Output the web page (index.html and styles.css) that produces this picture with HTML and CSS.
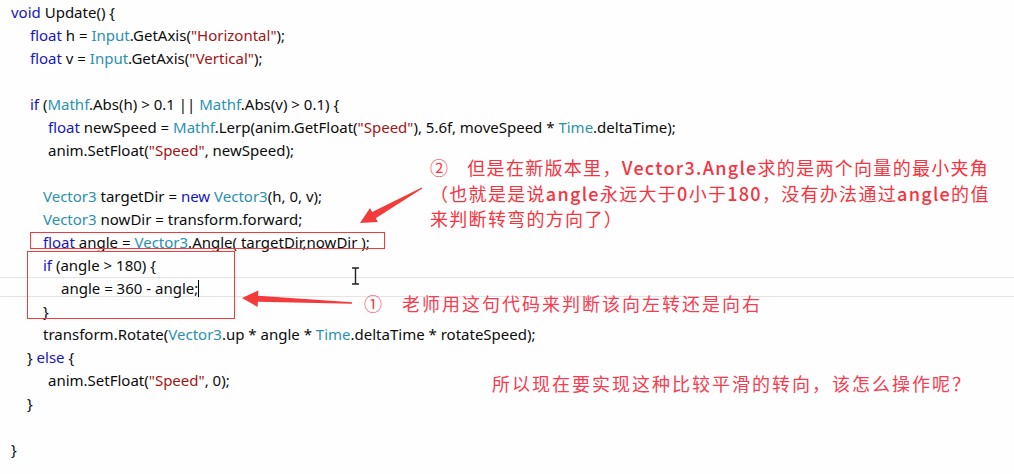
FILE: index.html
```html
<!DOCTYPE html>
<html lang="en">
<head>
    <meta charset="UTF-8">
    <title>Update()</title>
    <link rel="stylesheet" href="styles.css">
</head>
<body>

    <div class="editor">
        <!-- code lines -->
        <div class="ln"><span class="kw">void</span> Update() {</div>
        <div class="ln i1"><span class="kw">float</span> h = <span class="ty">Input</span>.GetAxis(<span class="str">"Horizontal"</span>);</div>
        <div class="ln i1"><span class="kw">float</span> v = <span class="ty">Input</span>.GetAxis(<span class="str">"Vertical"</span>);</div>
        <div class="ln"></div>
        <div class="ln i1"><span class="kw">if</span> (<span class="ty">Mathf</span>.Abs(h) &gt; 0.1 || <span class="ty">Mathf</span>.Abs(v) &gt; 0.1) {</div>
        <div class="ln i2"><span class="kw">float</span> newSpeed = <span class="ty">Mathf</span>.Lerp(anim.GetFloat(<span class="str">"Speed"</span>), 5.6f, moveSpeed * <span class="ty">Time</span>.deltaTime);</div>
        <div class="ln i2">anim.SetFloat(<span class="str">"Speed"</span>, newSpeed);</div>
        <div class="ln"></div>
        <div class="ln i4"><span class="ty">Vector3</span> targetDir = <span class="kw">new</span> <span class="ty">Vector3</span>(h, 0, v);</div>
        <div class="ln i4"><span class="ty">Vector3</span> nowDir = transform.forward;</div>
        <div class="ln i4"><span class="kw">float</span> angle = <span class="ty">Vector3</span>.Angle( targetDir,nowDir );</div>
        <div class="ln i4"><span class="kw">if</span> (angle &gt; 180) {</div>
        <div class="ln i3 current">angle = 360 - angle;<span class="caret"></span></div>
        <div class="ln i4">}</div>
        <div class="ln i4">transform.Rotate(<span class="ty">Vector3</span>.up * angle * <span class="ty">Time</span>.deltaTime * rotateSpeed);</div>
        <div class="ln i5">} <span class="kw">else</span> {</div>
        <div class="ln i2">anim.SetFloat(<span class="str">"Speed"</span>, 0);</div>
        <div class="ln i5">}</div>
        <div class="ln"></div>
        <div class="ln">}</div>

        <!-- red marks drawn over the code -->
        <div class="mark mark-line"></div>
        <div class="mark mark-block"></div>

        <svg class="arrow arrow-down" width="72" height="45" viewBox="0 0 72 45">
            <polygon points="5,40 22.9,39.1 20.7,35.2 67.3,5.6 66.7,4.4 17.2,29.05 15,25.1" fill="#f43b3b"/>
        </svg>
        <svg class="arrow arrow-left" width="120" height="22" viewBox="0 0 120 22">
            <polygon points="4,10 20.4,2.5 20.1,7.7 114,14.3 114,15.7 19.9,13.7 19.6,19" fill="#f43b3b"/>
        </svg>

        <svg class="ibeam" width="9" height="18" viewBox="0 0 9 18">
            <path d="M1 1 H8 M4.5 1 V17 M1 17 H8" stroke="#222" stroke-width="1.4" fill="none"/>
        </svg>

        <div class="note note-two">
            <div><span class="num">②</span>但是在新版本里，<b>Vector3.Angle</b>求的是两个向量的最小夹角</div>
            <div>（也就是是说<b>angle</b>永远大于<b>0</b>小于<b>180</b>，没有办法通过<b>angle</b>的值</div>
            <div>来判断转弯的方向了）</div>
        </div>
        <div class="note note-one"><span class="num">①</span>老师用这句代码来判断该向左转还是向右</div>
        <div class="note note-three">所以现在要实现这种比较平滑的转向，该怎么操作呢？</div>
    </div>

</body>
</html>
```

FILE: styles.css
```css
body {
    margin: 0;
    background: #fefefe;
    color: #0c0c0c;
    font-family: "Noto Sans", "Open Sans", sans-serif;
}

.editor {
    position: relative;
    height: 474px;
    padding-top: 1px;
    padding-left: 11px;
    overflow: hidden;
    font-size: 15px;
}

.ln {
    height: 23px;
    line-height: 23px;
    white-space: pre;
}

/* indent levels */
.i1 { padding-left: 19px; }
.i2 { padding-left: 37px; }
.i3 { padding-left: 50px; }
.i4 { padding-left: 32px; }
.i5 { padding-left: 16px; }

.kw { color: #1616c4; }
.ty { color: #2b91af; }
.str { color: #a31515; }

/* current line highlight */
.current {
    margin-left: -11px;
    padding-left: 61px;
    box-shadow: inset 0 1px #e4e4e4, inset 0 -3px #fefefe, inset 0 -4px #e4e4e4;
}

.caret {
    display: inline-block;
    width: 1px;
    height: 17px;
    background: #000;
    vertical-align: -3px;
}

.mark {
    position: absolute;
    border: 1.5px solid #f43b3b;
}

.mark-line {
    left: 30px;
    top: 232px;
    width: 353px;
    height: 15px;
}

.mark-block {
    left: 27px;
    top: 251px;
    width: 206px;
    height: 66px;
}

.arrow {
    position: absolute;
}

.arrow-down {
    left: 355px;
    top: 183px;
}

.arrow-left {
    left: 238px;
    top: 288px;
}

.ibeam {
    position: absolute;
    left: 351px;
    top: 267px;
}

.note {
    position: absolute;
    color: #f8333f;
    font-family: "Noto Sans CJK SC", sans-serif;
    font-size: 18px;
    white-space: nowrap;
}

.note b {
    font-weight: 500;
}

.note .num {
    margin-right: 18px;
}

.note-two {
    left: 430px;
    top: 155px;
    line-height: 25.5px;
    letter-spacing: 1.3px;
}

.note-one {
    left: 364px;
    top: 290px;
    line-height: 26px;
    letter-spacing: 2px;
    color: #fa3b50;
}

.note-three {
    left: 492px;
    top: 370px;
    line-height: 26px;
    letter-spacing: 2px;
    color: #fa3b50;
}
```
